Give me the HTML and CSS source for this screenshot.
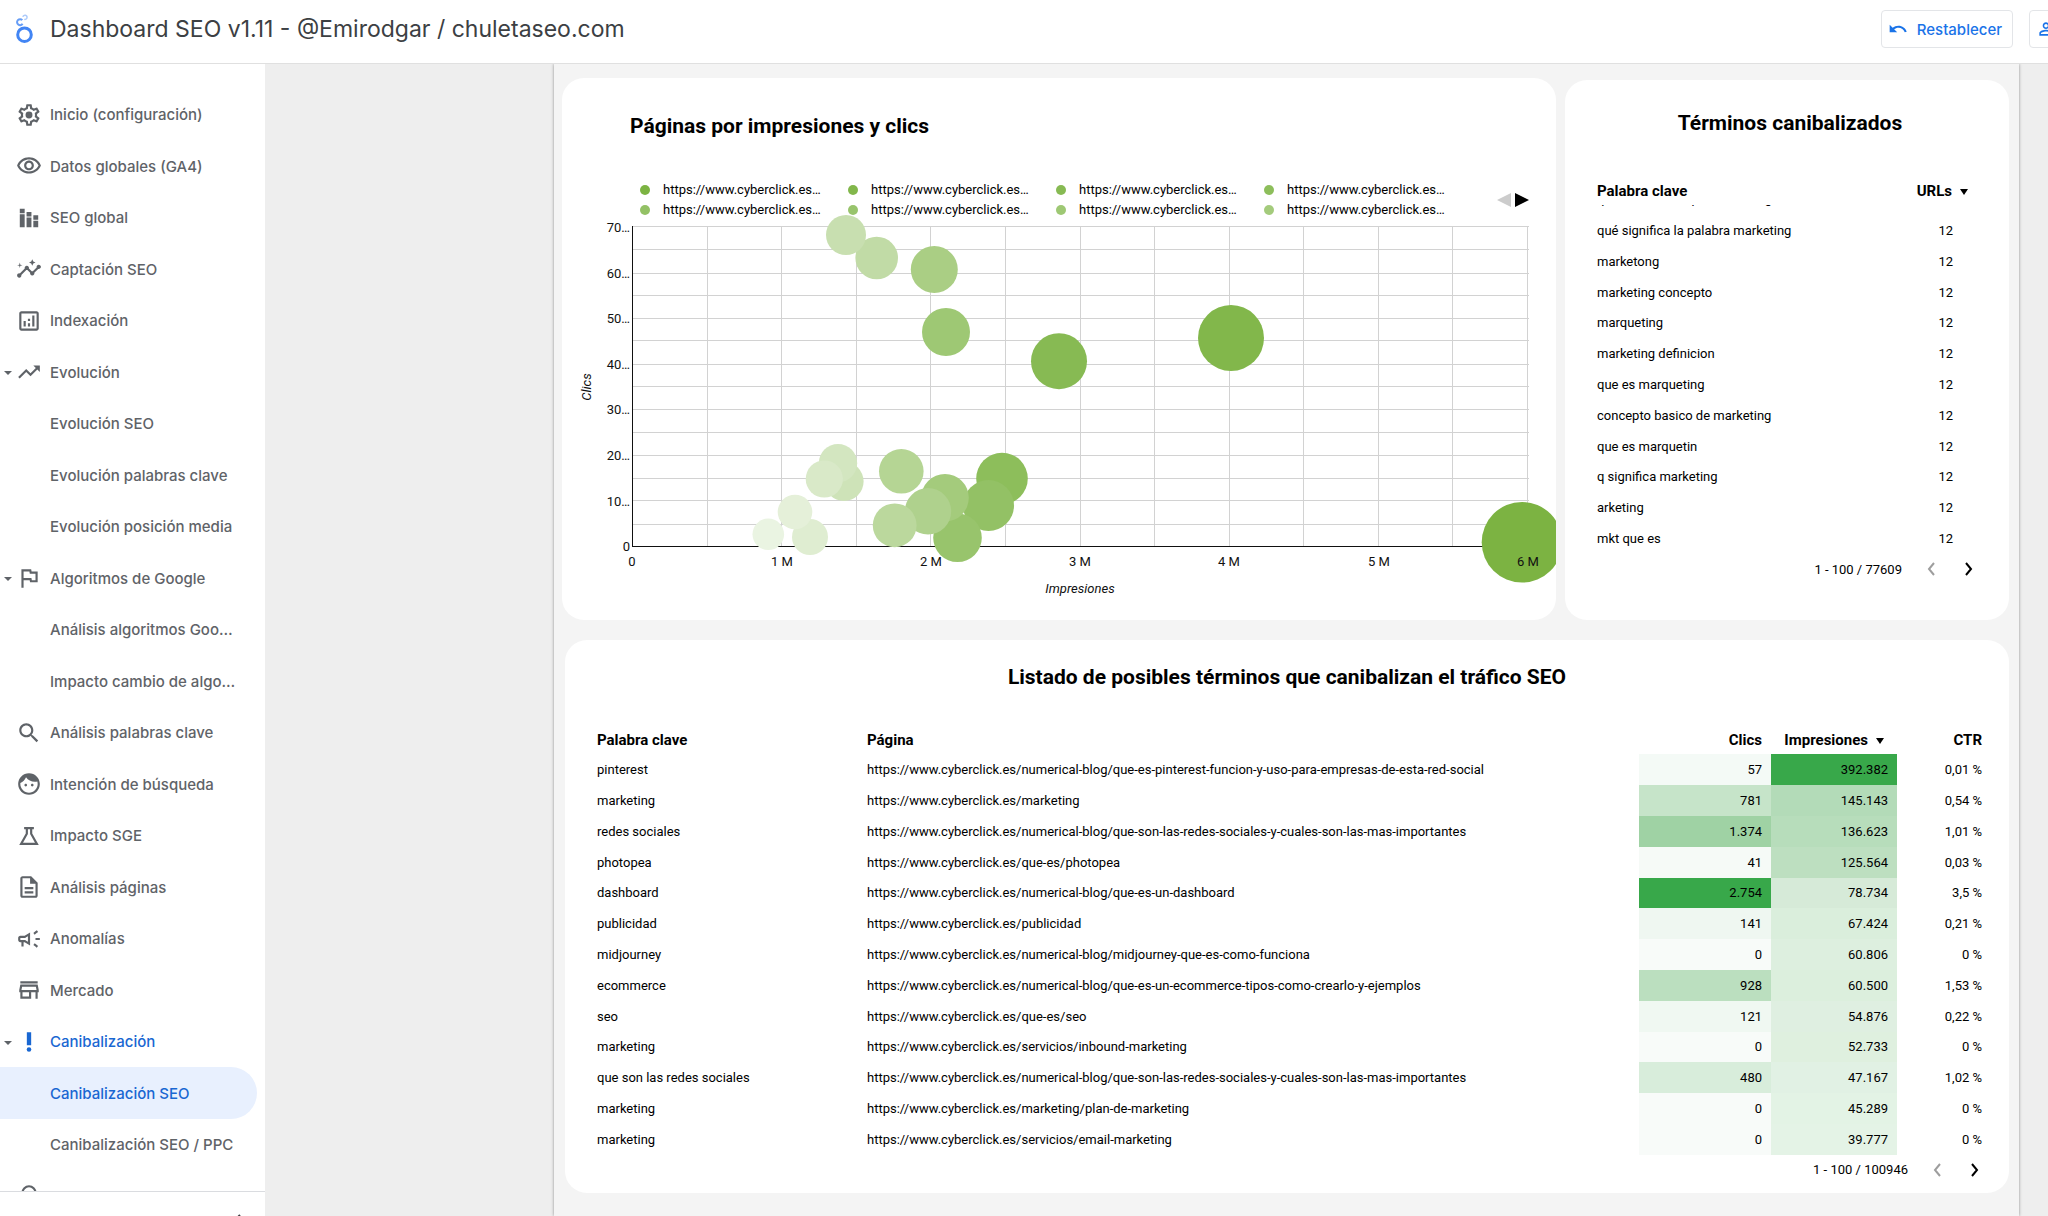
FILE: index.html
```html
<!DOCTYPE html>
<html lang="es">
<head>
<meta charset="utf-8">
<meta name="viewport" content="width=device-width, initial-scale=1">
<title>Dashboard SEO v1.11 - @Emirodgar / chuletaseo.com</title>
<link rel="stylesheet" href="styles.css">
</head>
<body>
<header class="topbar">
  <svg class="logo" viewBox="0 0 20 30" aria-hidden="true">
    <circle cx="10.500" cy="20.700" r="6.800" fill="none" stroke="#4285f4" stroke-width="3"/>
    <path d="M8.300 6.200A3 3 0 1 0 8.600 9.800" fill="none" stroke="#669df6" stroke-width="2"/>
    <path d="M8.900 2.900A2.100 2.100 0 1 1 10.300 5.300" fill="none" stroke="#aecbfa" stroke-width="1.500"/>
  </svg>
  <h1 class="topbar-title">Dashboard SEO v1.11 - @Emirodgar / chuletaseo.com</h1>
  <div class="topbar-actions">
    <button type="button" class="action">
      <svg class="action-icon" viewBox="0 0 24 24" aria-hidden="true"><path d="M12.5 8c-2.65 0-5.05.99-6.9 2.6L2 7v9h9l-3.62-3.62c1.39-1.16 3.160-1.880 5.120-1.880 3.540 0 6.550 2.310 7.600 5.500l2.370-.78C21.080 11.030 17.150 8 12.500 8z"/></svg>
      Restablecer
    </button>
    <button type="button" class="action action-share" aria-label="Compartir">
      <svg class="action-icon" viewBox="0 0 24 24" aria-hidden="true"><path d="M12 5.9c1.16 0 2.1.94 2.1 2.1s-.94 2.1-2.1 2.1S9.9 9.160 9.900 8s.94-2.1 2.1-2.1m0 9c2.970 0 6.100 1.460 6.100 2.100v1.100H5.900V17c0-.64 3.130-2.100 6.100-2.100M12 4C9.790 4 8 5.790 8 8s1.790 4 4 4 4-1.790 4-4-1.790-4-4-4zm0 9c-2.670 0-8 1.340-8 4v3h16v-3c0-2.660-5.330-4-8-4z"/></svg>
    </button>
  </div>
</header>

<div class="shell">
  <aside class="sidebar">
    <nav class="nav" aria-label="Páginas del informe">
      <ul class="nav-list">
        <li class="nav-row"><a class="nav-link" href="#"><svg class="nav-icon" viewBox="0 0 24 24"><path d="M19.43 12.98c.04-.32.07-.64.07-.98s-.03-.66-.07-.98l2.11-1.65c.19-.15.24-.42.12-.64l-2-3.46c-.09-.16-.26-.25-.44-.25-.06 0-.12.01-.17.03l-2.49 1c-.52-.4-1.08-.73-1.69-.98l-.38-2.65C14.46 2.18 14.25 2 14 2h-4c-.25 0-.46.18-.49.42l-.38 2.65c-.61.25-1.17.59-1.69.98l-2.49-1c-.06-.02-.12-.03-.18-.03-.17 0-.34.09-.43.25l-2 3.46c-.13.22-.07.49.12.64l2.11 1.65c-.04.32-.07.65-.07.98s.03.66.07.98l-2.11 1.65c-.19.15-.24.42-.12.64l2 3.46c.09.16.26.25.44.25.06 0 .12-.01.17-.03l2.49-1c.52.4 1.08.73 1.69.98l.38 2.65c.03.24.24.42.49.42h4c.25 0 .46-.18.49-.42l.38-2.65c.61-.25 1.17-.59 1.69-.98l2.49 1c.06.02.12.03.18.03.17 0 .34-.09.43-.25l2-3.46c.12-.22.07-.49-.12-.64l-2.11-1.65zm-1.98-1.71c.04.31.05.52.05.73 0 .21-.02.43-.05.73l-.14 1.13.89.7 1.08.84-.7 1.21-1.27-.51-1.04-.42-.9.68c-.43.32-.84.56-1.25.73l-1.06.43-.16 1.13-.2 1.35h-1.4l-.19-1.35-.16-1.13-1.06-.43c-.43-.18-.83-.41-1.23-.71l-.91-.7-1.06.43-1.27.51-.7-1.21 1.08-.84.89-.7-.14-1.13c-.03-.31-.05-.54-.05-.74s.02-.43.05-.73l.14-1.13-.89-.7-1.08-.84.7-1.21 1.27.51 1.04.42.9-.68c.43-.32.84-.56 1.25-.73l1.06-.43.16-1.13.2-1.35h1.39l.19 1.35.16 1.13 1.06.43c.43.18.83.41 1.23.71l.91.7 1.06-.43 1.27-.51.7 1.21-1.07.85-.89.7.14 1.13z"/><circle cx="12" cy="12" r="3.200"/></svg>Inicio (configuración)</a></li>
        <li class="nav-row"><a class="nav-link" href="#"><svg class="nav-icon" viewBox="0 0 24 24"><path d="M12 6c3.790 0 7.170 2.130 8.820 5.500C19.170 14.870 15.790 17 12 17s-7.170-2.130-8.820-5.500C4.830 8.130 8.210 6 12 6m0-2C7 4 2.730 7.110 1 11.500 2.730 15.890 7 19 12 19s9.270-3.110 11-7.500C21.270 7.110 17 4 12 4zm0 5c1.380 0 2.500 1.120 2.500 2.500S13.380 14 12 14s-2.500-1.120-2.500-2.500S10.620 9 12 9m0-2c-2.480 0-4.500 2.020-4.500 4.500S9.520 16 12 16s4.500-2.020 4.500-4.500S14.480 7 12 7z"/></svg>Datos globales (GA4)</a></li>
        <li class="nav-row"><a class="nav-link" href="#"><svg class="nav-icon" viewBox="0 0 24 24"><path d="M3.500 3.500H8V7.500H3.500zM3.500 8.500H8V20.500H3.500zM9.750 6.500h4.500v4h-4.500zM9.750 11.500h4.500v9h-4.500zM16 9.500h4.500v4H16zM16 14.500h4.500v6H16z"/></svg>SEO global</a></li>
        <li class="nav-row"><a class="nav-link" href="#"><svg class="nav-icon" viewBox="0 0 24 24"><path d="M21 8c-1.450 0-2.260 1.440-1.930 2.510l-3.550 3.560c-.3-.09-.74-.09-1.040 0l-2.550-2.550C12.270 10.450 11.460 9 10 9c-1.450 0-2.270 1.440-1.930 2.520l-4.560 4.550C2.440 15.740 1 16.550 1 18c0 1.100.9 2 2 2 1.450 0 2.260-1.440 1.930-2.510l4.550-4.560c.3.09.74.09 1.040 0l2.550 2.550C12.730 16.550 13.540 18 15 18c1.450 0 2.270-1.440 1.930-2.520l3.560-3.550C21.560 12.260 23 11.450 23 10c0-1.100-.9-2-2-2zM15 9l.94-2.070L18 6l-2.060-.93L15 3l-.92 2.070L12 6l2.080.93zM3.500 11L4 9l2-.5L4 8l-.5-2L3 8l-2 .5L3 9z"/></svg>Captación SEO</a></li>
        <li class="nav-row"><a class="nav-link" href="#"><svg class="nav-icon" viewBox="0 0 24 24"><path d="M19 3H5c-1.100 0-2 .9-2 2v14c0 1.100.9 2 2 2h14c1.100 0 2-.9 2-2V5c0-1.100-.9-2-2-2zm0 16H5V5h14v14zM7 12h2v5H7zM15 7h2v10h-2zM11 14h2v3h-2zM11 10h2v2h-2z"/></svg>Indexación</a></li>
        <li class="nav-row"><a class="nav-link" href="#"><span class="nav-caret"></span><svg class="nav-icon" viewBox="0 0 24 24"><path d="M16 6l2.290 2.290-4.880 4.880-4-4L2 16.590 3.410 18l6-6 4 4 6.300-6.290L22 12V6z"/></svg>Evolución</a></li>
        <li class="nav-row"><a class="nav-link nav-sub" href="#">Evolución SEO</a></li>
        <li class="nav-row"><a class="nav-link nav-sub" href="#">Evolución palabras clave</a></li>
        <li class="nav-row"><a class="nav-link nav-sub" href="#">Evolución posición media</a></li>
        <li class="nav-row"><a class="nav-link" href="#"><span class="nav-caret"></span><svg class="nav-icon" viewBox="0 0 24 24"><path d="M12.360 6l.4 2H18v6h-3.360l-.4-2H7V6h5.360M14 4H5v17h2v-7h5.600l.4 2h7V6h-5.600L14 4z"/></svg>Algoritmos de Google</a></li>
        <li class="nav-row"><a class="nav-link nav-sub" href="#">Análisis algoritmos Goo…</a></li>
        <li class="nav-row"><a class="nav-link nav-sub" href="#">Impacto cambio de algo…</a></li>
        <li class="nav-row"><a class="nav-link" href="#"><svg class="nav-icon" viewBox="0 0 24 24"><path d="M15.500 14h-.79l-.28-.27C15.410 12.590 16 11.110 16 9.500 16 5.910 13.090 3 9.500 3S3 5.910 3 9.500 5.910 16 9.500 16c1.610 0 3.090-.59 4.230-1.570l.27.28v.79l5 4.990L20.490 19l-4.990-5zm-6 0C7.010 14 5 11.990 5 9.500S7.010 5 9.500 5 14 7.010 14 9.500 11.990 14 9.500 14z"/></svg>Análisis palabras clave</a></li>
        <li class="nav-row"><a class="nav-link" href="#"><svg class="nav-icon" viewBox="0 0 24 24"><path d="M9 11.750c-.69 0-1.250.56-1.250 1.250s.56 1.250 1.250 1.250 1.250-.56 1.250-1.250-.56-1.250-1.250-1.250zm6 0c-.69 0-1.250.56-1.250 1.250s.56 1.250 1.250 1.250 1.250-.56 1.250-1.250-.56-1.250-1.250-1.250zM12 2C6.480 2 2 6.480 2 12s4.480 10 10 10 10-4.480 10-10S17.520 2 12 2zm0 18c-4.410 0-8-3.590-8-8 0-.29.020-.58.050-.86 2.360-1.050 4.230-2.980 5.210-5.370C11.070 8.330 14.050 10 17.420 10c.78 0 1.530-.09 2.250-.26.21.71.33 1.470.33 2.260 0 4.410-3.590 8-8 8z"/></svg>Intención de búsqueda</a></li>
        <li class="nav-row"><a class="nav-link" href="#"><svg class="nav-icon" viewBox="0 0 24 24"><path d="M7.500 4.700h9M10 4.700V10L4.700 19.300h14.600L14 10V4.700" fill="none" stroke="currentColor" stroke-width="2"/></svg>Impacto SGE</a></li>
        <li class="nav-row"><a class="nav-link" href="#"><svg class="nav-icon" viewBox="0 0 24 24"><path d="M8 16h8v2H8zm0-4h8v2H8zm6-10H6c-1.100 0-2 .9-2 2v16c0 1.100.89 2 1.990 2H18c1.100 0 2-.9 2-2V8l-6-6zm4 18H6V4h7v5h5v11z"/></svg>Análisis páginas</a></li>
        <li class="nav-row"><a class="nav-link" href="#"><svg class="nav-icon" viewBox="0 0 24 24"><path d="M18 11v2h4v-2zM16 17.610c.96.71 2.210 1.650 3.200 2.390.4-.53.8-1.070 1.200-1.600-.99-.74-2.240-1.680-3.200-2.400-.4.54-.8 1.080-1.200 1.610zM20.400 5.600C20 5.070 19.600 4.530 19.200 4c-.99.74-2.240 1.680-3.200 2.400.4.53.8 1.070 1.200 1.600.96-.72 2.210-1.650 3.200-2.400zM4 9c-1.100 0-2 .9-2 2v2c0 1.100.9 2 2 2h1v4h2v-4h1l5 3V6L8 9H4zm5.030 1.710L11 9.530v4.940l-1.970-1.180-.48-.29H4v-2h4.550l.48-.29z"/></svg>Anomalías</a></li>
        <li class="nav-row"><a class="nav-link" href="#"><svg class="nav-icon" viewBox="0 0 24 24"><path d="M18.360 9l.6 3H5.040l.6-3h12.720M20 4H4v2h16V4zm0 3H4l-1 5v2h1v6h10v-6h4v6h2v-6h1v-2l-1-5zM6 18v-4h6v4H6z"/></svg>Mercado</a></li>
        <li class="nav-row"><a class="nav-link nav-current" href="#"><span class="nav-caret"></span><svg class="nav-icon" viewBox="0 0 24 24"><path d="M10 3h4v12h-4z"/><circle cx="12" cy="19" r="2.100"/></svg>Canibalización</a></li>
        <li class="nav-row"><a class="nav-link nav-sub nav-current nav-selected" href="#" aria-current="page">Canibalización SEO</a></li>
        <li class="nav-row"><a class="nav-link nav-sub" href="#">Canibalización SEO / PPC</a></li>
        <li class="nav-row"><a class="nav-link" href="#" aria-label="Ideas"><svg class="nav-icon" viewBox="0 0 24 24"><circle cx="12" cy="9" r="6" fill="none" stroke="currentColor" stroke-width="2"/><path d="M9 17h6v2H9zM9 20h6v2H9z"/></svg></a></li>
      </ul>
    </nav>
    <div class="sidebar-foot">
      <button type="button" class="collapse" aria-label="Contraer navegación">
        <svg class="collapse-icon" viewBox="0 0 12 14" aria-hidden="true"><path d="M9 1L3 7l6 6" fill="none" stroke="#3c4043" stroke-width="2"/></svg>
      </button>
    </div>
  </aside>

  <main class="canvas">
    <div class="report">
      <section class="card card-chart">
        <h2 class="card-title">Páginas por impresiones y clics</h2>
        <div class="legend">
          <ul class="legend-list">
            <li class="legend-item"><span class="dot" style="background:#7cb342"></span>https://www.cyberclick.es…</li>
            <li class="legend-item"><span class="dot" style="background:#82b74b"></span>https://www.cyberclick.es…</li>
            <li class="legend-item"><span class="dot" style="background:#87ba53"></span>https://www.cyberclick.es…</li>
            <li class="legend-item"><span class="dot" style="background:#8dbe5b"></span>https://www.cyberclick.es…</li>
            <li class="legend-item"><span class="dot" style="background:#93c165"></span>https://www.cyberclick.es…</li>
            <li class="legend-item"><span class="dot" style="background:#98c46c"></span>https://www.cyberclick.es…</li>
            <li class="legend-item"><span class="dot" style="background:#9ec874"></span>https://www.cyberclick.es…</li>
            <li class="legend-item"><span class="dot" style="background:#a4cb7c"></span>https://www.cyberclick.es…</li>
          </ul>
          <div class="legend-pager">
            <button type="button" class="legend-arrow" aria-label="Anterior" disabled><svg viewBox="0 0 14 14"><path d="M14 0v14L0 7z" fill="#ccc"/></svg></button>
            <button type="button" class="legend-arrow" aria-label="Siguiente"><svg viewBox="0 0 14 14"><path d="M0 0v14l14-7z"/></svg></button>
          </div>
        </div>
        <svg class="plot" viewBox="562 220 994 400" role="img" aria-label="Clics por impresiones">
          <g class="plot-grid">
            <path d="M633 226.500H1529M633 249.500H1529M633 273.500H1529M633 295.500H1529M633 318.500H1529M633 340.500H1529M633 364.500H1529M633 386.500H1529M633 409.500H1529M633 432.500H1529M633 455.500H1529M633 478.500H1529M633 500.500H1529M633 524.500H1529"/>
            <path d="M707.500 226V546M781.500 226V546M856.500 226V546M930.500 226V546M1005.500 226V546M1080.500 226V546M1154.500 226V546M1229.500 226V546M1303.500 226V546M1378.500 226V546M1452.500 226V546M1527.500 226V546"/>
          </g>
          <path d="M632.500 226V546.500H1528" class="plot-axis"/>
          <g>
            <circle cx="1522" cy="542.300" r="40.300" fill="#7cb342"/>
            <circle cx="1231" cy="338" r="33" fill="#82b74b"/>
            <circle cx="1059" cy="361.200" r="28" fill="#87ba53"/>
            <circle cx="1002" cy="478.500" r="25.800" fill="#8dbe5b"/>
            <circle cx="988.500" cy="505.500" r="25.500" fill="#93c165"/>
            <circle cx="957.500" cy="537.700" r="24.300" fill="#98c46c"/>
            <circle cx="946" cy="332" r="24" fill="#9ec874"/>
            <circle cx="945" cy="497.800" r="23.800" fill="#a4cb7c"/>
            <circle cx="934.300" cy="269.500" r="23.500" fill="#aace84"/>
            <circle cx="928" cy="511.300" r="23.200" fill="#afd18d"/>
            <circle cx="901.300" cy="471.300" r="22.300" fill="#b5d594"/>
            <circle cx="894.700" cy="525.300" r="21.900" fill="#bbd89d"/>
            <circle cx="876.700" cy="258" r="21.300" fill="#c1dba6"/>
            <circle cx="846" cy="235" r="20" fill="#c8dfb0"/>
            <circle cx="844" cy="481.400" r="19.600" fill="#cee3b8"/>
            <circle cx="838" cy="463.200" r="19.200" fill="#d3e6c0"/>
            <circle cx="824.300" cy="479" r="18.600" fill="#d9e9c8"/>
            <circle cx="810" cy="537" r="18" fill="#dfedd1"/>
            <circle cx="795" cy="512" r="17.300" fill="#e5f0d9"/>
            <circle cx="768.300" cy="534.300" r="15.800" fill="#eaf4e2"/>
          </g>
          <g class="plot-text plot-y">
            <text x="630" y="232">70…</text><text x="630" y="278">60…</text><text x="630" y="323">50…</text><text x="630" y="369">40…</text><text x="630" y="414">30…</text><text x="630" y="460">20…</text><text x="630" y="506">10…</text><text x="630" y="551">0</text>
          </g>
          <g class="plot-text plot-x">
            <text x="632" y="566">0</text><text x="782" y="566">1 M</text><text x="931" y="566">2 M</text><text x="1080" y="566">3 M</text><text x="1229" y="566">4 M</text><text x="1379" y="566">5 M</text><text x="1528" y="566">6 M</text>
            <text x="1080" y="593" class="plot-name">Impresiones</text>
            <text x="0" y="0" class="plot-name" transform="translate(591 387) rotate(-90)">Clics</text>
          </g>
        </svg>
      </section>

      <section class="card card-terms">
        <h2 class="card-title">Términos canibalizados</h2>
        <table class="data terms-table">
          <colgroup><col><col class="col-urls"></colgroup>
          <thead><tr><th scope="col">Palabra clave</th><th scope="col" class="num">URLs<svg class="sort" viewBox="0 0 8 6"><path d="M0 0h8L4 6z"/></svg></th></tr></thead>
          <tbody>
            <tr class="peek"><td><div class="peek-box">que se entiende por marketing</div></td><td></td></tr>
            <tr><td>qué significa la palabra marketing</td><td class="num">12</td></tr>
            <tr><td>marketong</td><td class="num">12</td></tr>
            <tr><td>marketing concepto</td><td class="num">12</td></tr>
            <tr><td>marqueting</td><td class="num">12</td></tr>
            <tr><td>marketing definicion</td><td class="num">12</td></tr>
            <tr><td>que es marqueting</td><td class="num">12</td></tr>
            <tr><td>concepto basico de marketing</td><td class="num">12</td></tr>
            <tr><td>que es marquetin</td><td class="num">12</td></tr>
            <tr><td>q significa marketing</td><td class="num">12</td></tr>
            <tr><td>arketing</td><td class="num">12</td></tr>
            <tr><td>mkt que es</td><td class="num">12</td></tr>
          </tbody>
        </table>
        <div class="pager">
          <span class="pager-text">1 - 100 / 77609</span>
          <button type="button" class="pager-btn" aria-label="Página anterior" disabled><svg class="chevron" viewBox="0 0 8 14"><path d="M7 1L2 7l5 6"/></svg></button>
          <button type="button" class="pager-btn" aria-label="Página siguiente"><svg class="chevron" viewBox="0 0 8 14"><path d="M1 1l5 6-5 6"/></svg></button>
        </div>
      </section>

      <section class="card card-list">
        <h2 class="card-title">Listado de posibles términos que canibalizan el tráfico SEO</h2>
        <table class="data list-table">
          <colgroup><col class="col-key"><col><col class="col-clicks"><col class="col-impr"><col class="col-ctr"></colgroup>
          <thead><tr><th scope="col">Palabra clave</th><th scope="col">Página</th><th scope="col" class="num">Clics</th><th scope="col" class="num th-sorted">Impresiones<svg class="sort" viewBox="0 0 8 6"><path d="M0 0h8L4 6z"/></svg></th><th scope="col" class="num">CTR</th></tr></thead>
          <tbody>
            <tr><td>pinterest</td><td>https://www.cyberclick.es/numerical-blog/que-es-pinterest-funcion-y-uso-para-empresas-de-esta-red-social</td><td class="num" style="background:#f4faf6">57</td><td class="num" style="background:#38a84a">392.382</td><td class="num">0,01 %</td></tr>
            <tr><td>marketing</td><td>https://www.cyberclick.es/marketing</td><td class="num" style="background:#c6e4c9">781</td><td class="num" style="background:#b3dbb8">145.143</td><td class="num">0,54 %</td></tr>
            <tr><td>redes sociales</td><td>https://www.cyberclick.es/numerical-blog/que-son-las-redes-sociales-y-cuales-son-las-mas-importantes</td><td class="num" style="background:#9fd2a4">1.374</td><td class="num" style="background:#b7ddbb">136.623</td><td class="num">1,01 %</td></tr>
            <tr><td>photopea</td><td>https://www.cyberclick.es/que-es/photopea</td><td class="num" style="background:#f6faf7">41</td><td class="num" style="background:#bddfc0">125.564</td><td class="num">0,03 %</td></tr>
            <tr><td>dashboard</td><td>https://www.cyberclick.es/numerical-blog/que-es-un-dashboard</td><td class="num" style="background:#38a84a">2.754</td><td class="num" style="background:#d6ead8">78.734</td><td class="num">3,5 %</td></tr>
            <tr><td>publicidad</td><td>https://www.cyberclick.es/publicidad</td><td class="num" style="background:#eff7f1">141</td><td class="num" style="background:#daeedc">67.424</td><td class="num">0,21 %</td></tr>
            <tr><td>midjourney</td><td>https://www.cyberclick.es/numerical-blog/midjourney-que-es-como-funciona</td><td class="num" style="background:#f8fbf9">0</td><td class="num" style="background:#ddefdf">60.806</td><td class="num">0 %</td></tr>
            <tr><td>ecommerce</td><td>https://www.cyberclick.es/numerical-blog/que-es-un-ecommerce-tipos-como-crearlo-y-ejemplos</td><td class="num" style="background:#bbdfbf">928</td><td class="num" style="background:#dcefdd">60.500</td><td class="num">1,53 %</td></tr>
            <tr><td>seo</td><td>https://www.cyberclick.es/que-es/seo</td><td class="num" style="background:#f0f8f2">121</td><td class="num" style="background:#dfefe1">54.876</td><td class="num">0,22 %</td></tr>
            <tr><td>marketing</td><td>https://www.cyberclick.es/servicios/inbound-marketing</td><td class="num" style="background:#f8fbf9">0</td><td class="num" style="background:#dff0df">52.733</td><td class="num">0 %</td></tr>
            <tr><td>que son las redes sociales</td><td>https://www.cyberclick.es/numerical-blog/que-son-las-redes-sociales-y-cuales-son-las-mas-importantes</td><td class="num" style="background:#d8eddb">480</td><td class="num" style="background:#e1f1e4">47.167</td><td class="num">1,02 %</td></tr>
            <tr><td>marketing</td><td>https://www.cyberclick.es/marketing/plan-de-marketing</td><td class="num" style="background:#f8fbf9">0</td><td class="num" style="background:#e3f3e5">45.289</td><td class="num">0 %</td></tr>
            <tr><td>marketing</td><td>https://www.cyberclick.es/servicios/email-marketing</td><td class="num" style="background:#f8fbf9">0</td><td class="num" style="background:#e4f3e6">39.777</td><td class="num">0 %</td></tr>
          </tbody>
        </table>
        <div class="pager">
          <span class="pager-text">1 - 100 / 100946</span>
          <button type="button" class="pager-btn" aria-label="Página anterior" disabled><svg class="chevron" viewBox="0 0 8 14"><path d="M7 1L2 7l5 6"/></svg></button>
          <button type="button" class="pager-btn" aria-label="Página siguiente"><svg class="chevron" viewBox="0 0 8 14"><path d="M1 1l5 6-5 6"/></svg></button>
        </div>
      </section>
    </div>
  </main>
</div>
</body>
</html>
```

FILE: styles.css
```css
* { box-sizing: border-box; }

body {
  margin: 0;
  height: 100vh;
  display: flex;
  flex-direction: column;
  overflow: hidden;
  background: #fff;
  color: #000;
  font-family: Roboto, "Liberation Sans", sans-serif;
  font-size: 13px;
}

ul { margin: 0; padding: 0; list-style: none; }
h1, h2 { margin: 0; }
button { font: inherit; color: inherit; background: none; border: 0; padding: 0; }

/* Top bar */
.topbar {
  flex: none;
  display: flex;
  align-items: center;
  height: 64px;
  padding: 0 0 5px 14px;
  border-bottom: 1px solid #e0e0e0;
  overflow: hidden;
  font-family: Inter, "Open Sans", sans-serif;
}
.logo { flex: none; width: 20px; height: 30px; margin-right: 16px; }
.topbar-title {
  flex: 1;
  color: #3c4043;
  font-size: 23px;
  line-height: 32px;
  font-weight: 400;
}
.topbar-actions { flex: none; display: flex; gap: 16px; margin-right: -21px; }
.action {
  display: flex;
  align-items: center;
  gap: 9px;
  height: 38px;
  padding: 0 10px 0 6px;
  border: 1px solid #e3e5e8;
  border-radius: 4px;
  color: #1a73e8;
  font-size: 15px;
  font-weight: 500;
}
.action-share { width: 40px; }
.action-icon { flex: none; width: 20px; height: 20px; fill: currentColor; }

.shell { flex: 1; min-height: 0; display: flex; }

/* Page navigation */
.sidebar {
  flex: none;
  width: 265px;
  display: flex;
  flex-direction: column;
  background: #fff;
  font-family: Inter, "Open Sans", sans-serif;
}
.nav { flex: 1; min-height: 0; padding-top: 25px; overflow: hidden; }
.nav-row { height: 51px; padding-right: 8px; }
.nav-row:nth-child(even) { height: 52px; }
.nav-link {
  position: relative;
  display: flex;
  align-items: center;
  gap: 8px;
  height: 100%;
  padding-left: 16px;
  color: #5f6368;
  font-size: 15px;
  font-weight: 500;
  text-decoration: none;
  white-space: nowrap;
}
.nav-sub { padding-left: 50px; }
.nav-icon { flex: none; width: 26px; height: 26px; fill: currentColor; }
.nav-caret {
  position: absolute;
  left: 4px;
  top: 25px;
  border: 4px solid transparent;
  border-top-color: #5f6368;
  border-bottom: 0;
}
.nav-current { color: #1967d2; }
.nav-selected { background: #e8f0fe; border-radius: 0 26px 26px 0; }
.sidebar-foot {
  flex: none;
  display: flex;
  justify-content: flex-end;
  height: 25px;
  padding: 22px 20px 0 0;
  border-top: 1px solid #dadce0;
  overflow: hidden;
}
.collapse { flex: none; width: 14px; height: 14px; }
.collapse-icon { display: block; width: 12px; height: 14px; }

/* Report */
.canvas { flex: 1; min-width: 0; padding: 0 29px 0 289px; background: #eee; overflow: hidden; }
.report {
  display: grid;
  grid-template-columns: 994fr 444fr;
  column-gap: 9px;
  row-gap: 20px;
  align-content: start;
  height: 100%;
  padding: 14px 10px 0 8px;
  background: #f4f4f4;
  box-shadow: 0 0 3px rgba(0, 0, 0, .4);
}
.card { background: #fff; border-radius: 22px; overflow: hidden; }
.card-title { font-size: 21px; line-height: 28px; font-weight: 700; text-align: center; }

/* Bubble chart */
.card-chart { padding-top: 34px; }
.card-chart .card-title { padding-left: 68px; text-align: left; }
.legend {
  display: flex;
  justify-content: space-between;
  align-items: center;
  padding: 40px 27px 0 78px;
}
.legend-list { display: grid; grid-template-columns: repeat(4, 208px); }
.legend-item { display: flex; align-items: center; gap: 13px; line-height: 20px; }
.dot { width: 10px; height: 10px; border-radius: 50%; }
.legend-pager { display: flex; gap: 4px; }
.legend-arrow { width: 14px; height: 14px; }
.legend-arrow svg { display: block; }
.plot { display: block; width: 100%; overflow: visible; }
.plot-grid path { fill: none; stroke: #d2d2d2; stroke-width: 1; shape-rendering: crispEdges; }
.plot-axis { fill: none; stroke: #111; stroke-width: 1; shape-rendering: crispEdges; }
.plot-text { font-size: 13px; fill: #111; }
.plot-y { text-anchor: end; }
.plot-x { text-anchor: middle; }
.plot-name { font-style: italic; }

/* Tables */
.data { table-layout: fixed; border-collapse: collapse; }
.data th {
  height: 28px;
  padding: 0 9px;
  font-size: 15px;
  line-height: 20px;
  font-weight: 700;
  text-align: left;
  white-space: nowrap;
}
.data td { height: 31px; padding: 0 9px; line-height: 20px; white-space: nowrap; }
.data tr:nth-child(5n) td { height: 30px; }
.data .num { text-align: right; }
.data .th-sorted { padding-right: 13px; }
.sort { width: 8px; height: 6px; margin-left: 8px; vertical-align: middle; }

.card-terms { margin-top: 2px; padding-top: 29px; }
.card-terms .card-title { padding-left: 6px; }
.terms-table { width: calc(100% - 55px); margin: 40px 32px 0 23px; }
.terms-table td.num { padding-right: 24px; }
.col-urls { width: 120px; }
/* Row scrolled under the header: only its last pixels stay visible */
.data .peek td { height: 10px; }
.peek-box {
  display: flex;
  align-items: flex-end;
  height: 10px;
  padding-bottom: 6px;
  overflow: hidden;
}

.card-list { grid-column: 1 / -1; margin-left: 3px; padding: 23px 0 9px; }
.list-table { width: calc(100% - 41px); margin: 35px 18px 0 23px; }
.col-key { width: 270px; }
.col-clicks { width: 132px; }
.col-impr { width: 126px; }
.col-ctr { width: 94px; }

.pager {
  display: flex;
  justify-content: flex-end;
  align-items: center;
  height: 30px;
  padding-right: 21px;
}
.card-list .pager { height: 29px; padding-right: 15px; }
.pager-text { margin-right: 10px; }
.pager-btn { display: flex; justify-content: center; align-items: center; width: 38px; height: 28px; }
.chevron { width: 8px; height: 14px; fill: none; stroke: #000; stroke-width: 2; }
.pager-btn:disabled .chevron { stroke: #9e9e9e; }
```
